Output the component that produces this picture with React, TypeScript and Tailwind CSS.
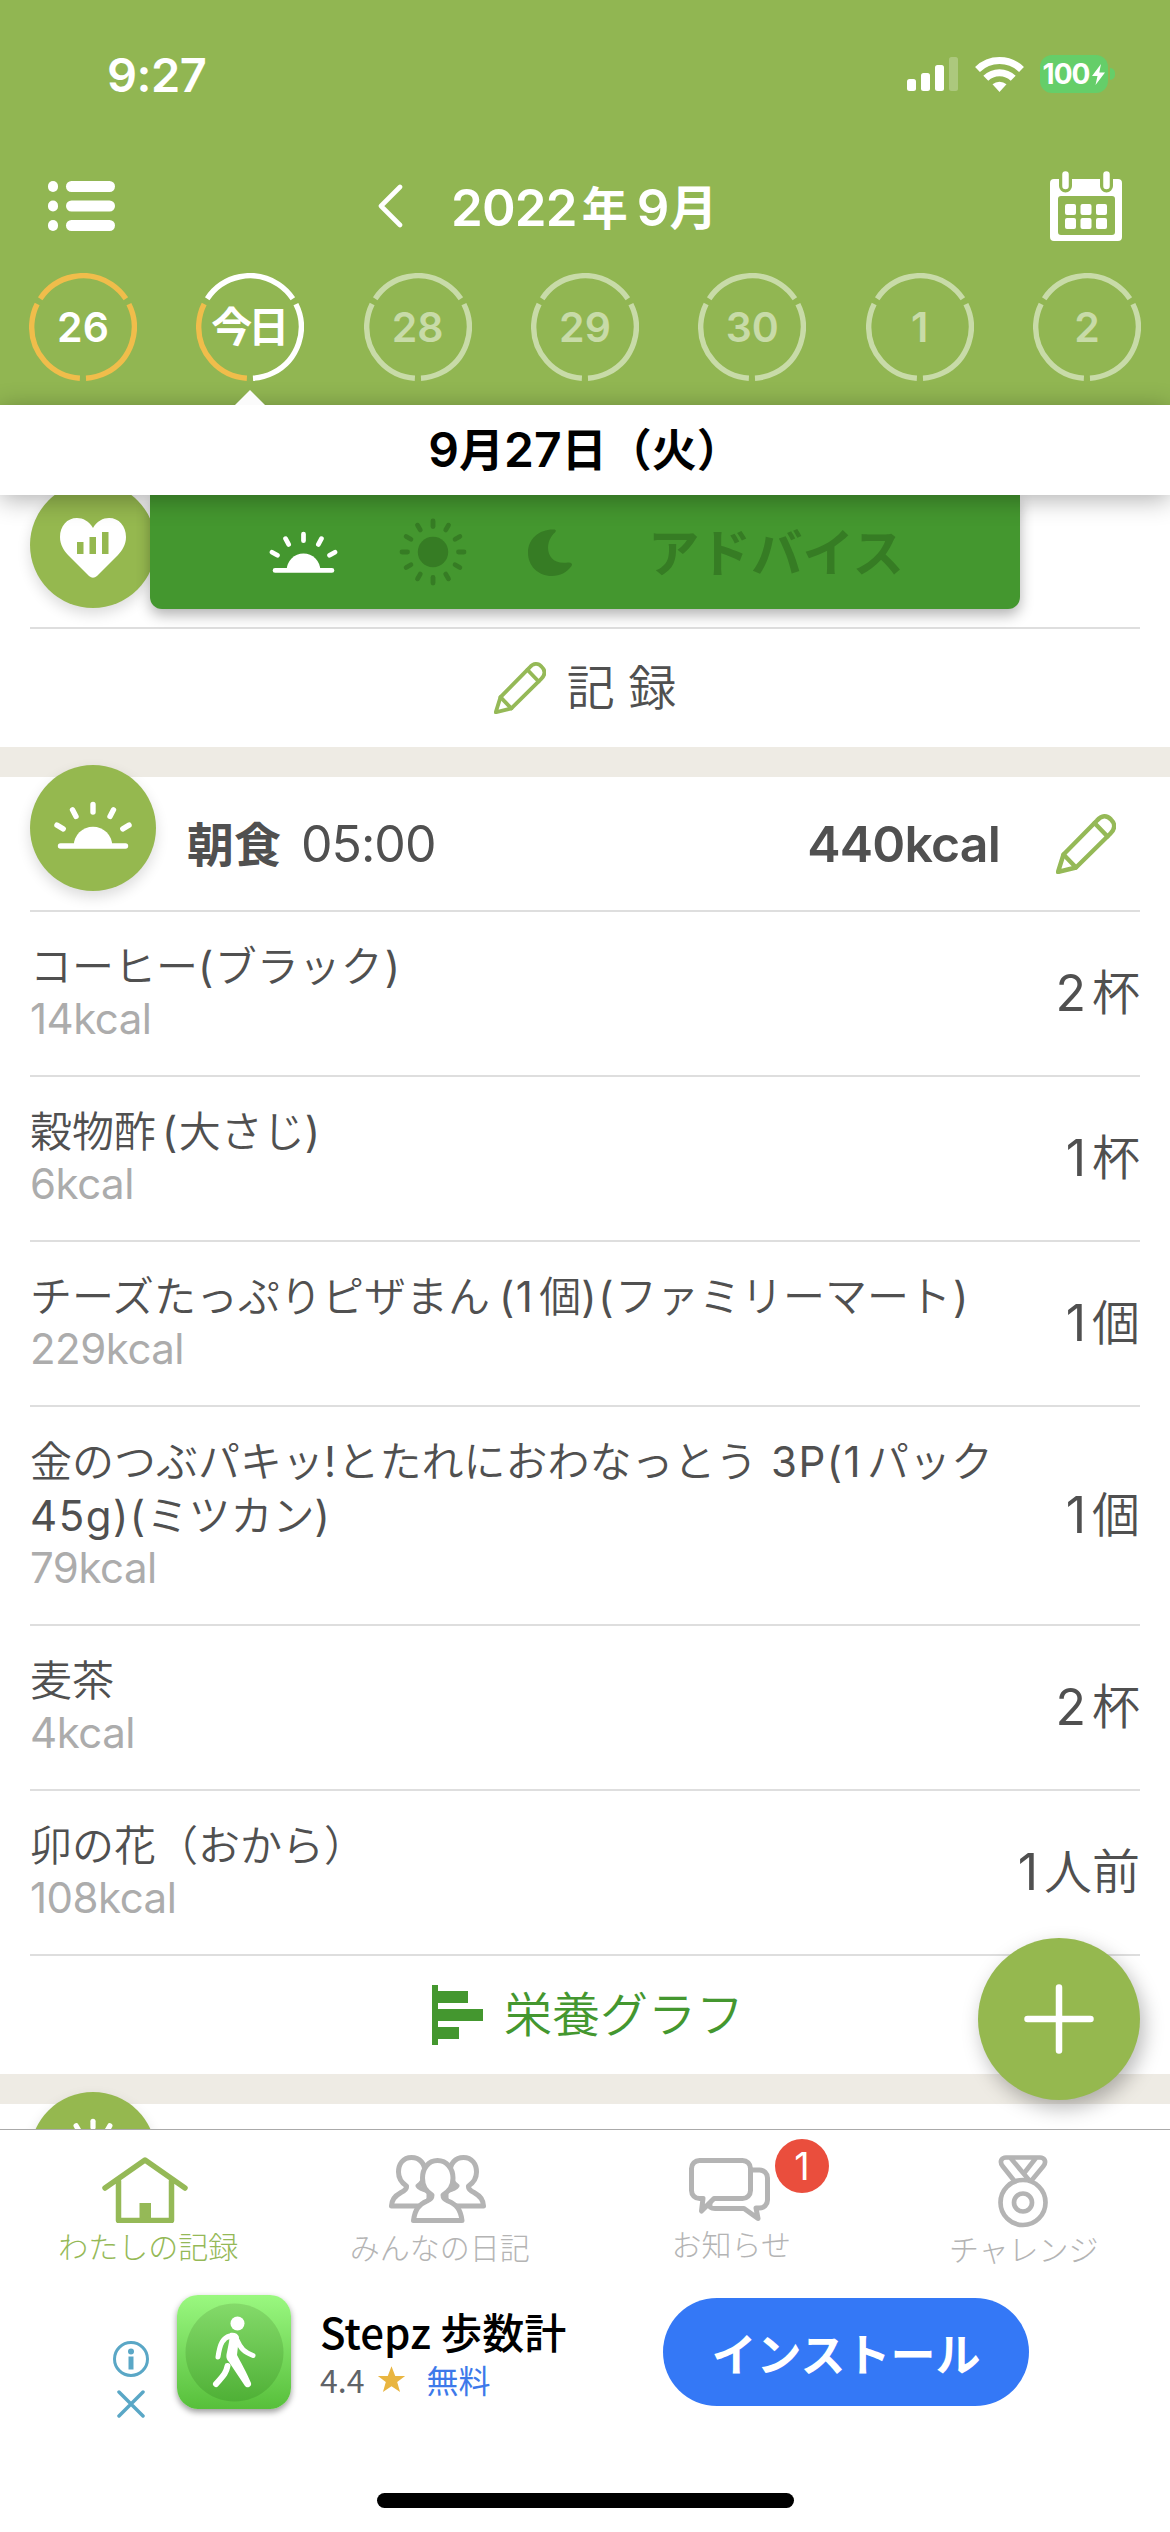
import React from 'react';

interface DayItem {
  label: string;
  state: 'done' | 'today' | 'future';
}

interface FoodItem {
  name: React.ReactNode;
  kcal: string;
  amount: string;
  unit: string;
}

const days: DayItem[] = [
  { label: '26', state: 'done' },
  { label: '今日', state: 'today' },
  { label: '28', state: 'future' },
  { label: '29', state: 'future' },
  { label: '30', state: 'future' },
  { label: '1', state: 'future' },
  { label: '2', state: 'future' }
];

// Latin letters, digits and brackets inside a Japanese name
const Latin: React.FC<{ className?: string; children: React.ReactNode }> = ({ className = '', children }) => (
  <span className={`font-normal tracking-[1.5px] ${className}`}>{children}</span>
);

const foods: FoodItem[] = [
  {
    name: (
      <>
        コーヒー<Latin>(</Latin>ブラック<Latin className="ml-[2px]">)</Latin>
      </>
    ),
    kcal: '14kcal',
    amount: '2',
    unit: '杯'
  },
  {
    name: (
      <>
        穀物酢<Latin className="ml-[6px]">(</Latin>大さじ<Latin>)</Latin>
      </>
    ),
    kcal: '6kcal',
    amount: '1',
    unit: '杯'
  },
  {
    name: (
      <>
        チーズたっぷりピザまん<Latin className="ml-[9px]">(1</Latin>
        <span className="ml-[5px]">個</span>
        <Latin>)(</Latin>ファミリーマート<Latin className="ml-[2px]">)</Latin>
      </>
    ),
    kcal: '229kcal',
    amount: '1',
    unit: '個'
  },
  {
    name: (
      <>
        金のつぶパキッ<Latin>!</Latin>とたれにおわなっとう<Latin className="mr-[5px]"> 3P(1</Latin>パック
        <br />
        <Latin>45g)(</Latin>ミツカン<Latin>)</Latin>
      </>
    ),
    kcal: '79kcal',
    amount: '1',
    unit: '個'
  },
  { name: '麦茶', kcal: '4kcal', amount: '2', unit: '杯' },
  { name: '卯の花（おから）', kcal: '108kcal', amount: '1', unit: '人前' }
];

const ringColors = {
  done: ['#f0bd4b', '#f0bd4b', '#f0bd4b'],
  today: ['#ffffff', '#f0bd4b', '#ffffff'],
  future: ['#c8dba8', '#c8dba8', '#c8dba8']
};

// Three arcs, starting at the lower right and going clockwise
const DayRing: React.FC<{ state: DayItem['state'] }> = ({ state }) => {
  const [right, left, top] = ringColors[state];
  const arcs = [
    { color: right, rotate: -26.5 },
    { color: left, rotate: 93.5 },
    { color: top, rotate: 213.5 }
  ];
  return (
    <svg viewBox="-54 -54 108 108" className="absolute inset-0 size-full" fill="none">
      {arcs.map((arc) => (
        <circle
          key={arc.rotate}
          r="51.3"
          stroke={arc.color}
          strokeWidth="5.4"
          strokeDasharray="101.2 400"
          transform={`rotate(${arc.rotate})`}
        />
      ))}
    </svg>
  );
};

const SunriseIcon: React.FC<{ className?: string }> = ({ className }) => (
  <svg viewBox="-39 -45 78 48" className={className} stroke="currentColor" strokeWidth="5.4" strokeLinecap="round">
    <path d="M-32.5 0H32.5" />
    <path d="M-19.3 0a19.3 19.3 0 0 1 38.6 0z" fill="currentColor" stroke="none" />
    <path d="M0 -41.5V-34M20.5 -36.2L17 -29.6M-20.5 -36.2L-17 -29.6M36 -20.8L29.8 -17.2M-36 -20.8L-29.8 -17.2" />
  </svg>
);

const SunIcon: React.FC<{ className?: string }> = ({ className }) => (
  <svg viewBox="-34 -34 68 68" className={className} stroke="currentColor" strokeWidth="4.8" strokeLinecap="round">
    <circle r="15.2" fill="currentColor" stroke="none" />
    {[0, 30, 60, 90, 120, 150, 180, 210, 240, 270, 300, 330].map((angle) => (
      <path key={angle} d="M0 -31V-25.5" transform={`rotate(${angle})`} />
    ))}
  </svg>
);

const PencilIcon: React.FC<{ className?: string }> = ({ className }) => (
  <svg
    viewBox="0 0 60 60"
    className={className}
    fill="none"
    stroke="#95b957"
    strokeWidth="4.4"
    strokeLinejoin="round"
    strokeLinecap="round"
  >
    <path d="M2 58L7.5 40.5L41 6.5C45.5 1 51 1 55 5.5C59.5 10 59 15 54.5 19.5L20 53.5Z" />
    <path d="M38.5 9L51.5 22.5M7.5 40.5L20 53.5" />
  </svg>
);

const CircleBadge: React.FC<{ className?: string; children: React.ReactNode }> = ({ className, children }) => (
  <div
    className={`flex size-[126px] shrink-0 items-center justify-center rounded-full bg-[#95b84f] text-white shadow-[0_6px_14px_rgba(0,0,0,0.14)] ${className}`}
  >
    {children}
  </div>
);

const StatusBar = () => (
  <div className="flex h-[148px] shrink-0 items-center pl-[107px] pr-[55px]">
    <span className="text-[47px] font-semibold leading-none tracking-[-0.5px]">9:27</span>
    <svg viewBox="0 0 52 36" className="ml-auto h-[36px] w-[52px]" fill="#fff">
      <rect x="0" y="23" width="9" height="12" rx="2.5" />
      <rect x="14" y="17" width="9" height="18" rx="2.5" />
      <rect x="28" y="9" width="9" height="26" rx="2.5" />
      <rect x="42" y="1" width="9" height="34" rx="2.5" opacity="0.25" />
    </svg>
    <svg viewBox="0 0 49 36" className="ml-[16px] h-[36px] w-[49px]" fill="none" stroke="#fff" strokeWidth="7">
      <path d="M2.5 13.5A31.5 31.5 0 0 1 46.5 13.5" />
      <path d="M10.8 22.3A19.5 19.5 0 0 1 38.2 22.3" />
      <path d="M17.5 28.3A10.5 10.5 0 0 1 31.5 28.3L24.5 36Z" fill="#fff" stroke="none" />
    </svg>
    <div className="ml-[16px] flex h-[38px] w-[68px] items-center justify-center rounded-[12px] bg-[#65ce69]">
      <span className="text-[28px] font-bold leading-none tracking-[-1px]">100</span>
      <svg viewBox="0 0 13 21" className="ml-[3px] h-[21px] w-[13px]" fill="#fff">
        <path d="M9 0L0 12H5.5L3.5 21L13 8.5H7.3Z" />
      </svg>
    </div>
    <div className="ml-[2px] h-[12px] w-[5px] rounded-r-full bg-[#65ce69]" />
  </div>
);

const Header = () => (
  <header className="flex h-[405px] shrink-0 flex-col bg-[#91b652] text-white">
    <StatusBar />

    {/* Month navigation */}
    <div className="flex h-[116px] shrink-0 items-center pl-[48px] pr-[48px]">
      <svg viewBox="0 0 67 50" className="h-[50px] w-[67px]" fill="#fff">
        {[0, 19.5, 39].map((y) => (
          <g key={y}>
            <rect x="0" y={y} width="10" height="11" rx="5" />
            <rect x="18" y={y} width="49" height="11" rx="5.5" />
          </g>
        ))}
      </svg>
      <svg
        viewBox="0 0 26 44"
        className="ml-[262px] h-[44px] w-[26px]"
        fill="none"
        stroke="#fff"
        strokeWidth="4.6"
        strokeLinecap="round"
        strokeLinejoin="round"
      >
        <path d="M23 3L4 22L23 41" />
      </svg>
      <h1 className="ml-[48px] mt-[3px] flex items-center text-[51px] font-semibold leading-none">
        <span className="tracking-[-0.8px]">2022</span>
        <span className="ml-[5px] text-[46px]">年</span>
        <span className="ml-[9px]">9</span>
        <span className="text-[48px]">月</span>
      </h1>
      <svg viewBox="0 0 72 70" className="ml-auto h-[70px] w-[72px]">
        <path
          d="M4 8H68a4 4 0 0 1 4 4V66a4 4 0 0 1-4 4H4a4 4 0 0 1-4-4V12a4 4 0 0 1 4-4zM11 25a3 3 0 0 0-3 3V61a3 3 0 0 0 3 3H62a3 3 0 0 0 3-3V28a3 3 0 0 0-3-3z"
          fill="#fff"
          fillRule="evenodd"
        />
        <path d="M15.5 6V15M56.5 6V15" stroke="#91b652" strokeWidth="13" strokeLinecap="round" />
        <path d="M15.5 3.5V15M56.5 3.5V15" stroke="#fff" strokeWidth="6.5" strokeLinecap="round" />
        {[15, 30.5, 46].map((x) => (
          <g key={x} fill="#fff">
            <rect x={x} y="33" width="11" height="11" rx="2" />
            <rect x={x} y="47" width="11" height="11" rx="2" />
          </g>
        ))}
      </svg>
    </div>

    {/* Day selector */}
    <div className="mt-[9px] flex justify-between px-[29px]">
      {days.map((day) => (
        <div key={day.label} className="relative flex size-[108px] items-center justify-center">
          <DayRing state={day.state} />
          <span
            className={`text-[41px] font-semibold leading-none ${
              day.state === 'future' ? 'text-[#c8dba8]' : 'text-white'
            } ${day.state === 'today' ? 'mr-[4px] tracking-[-4px]' : ''}`}
          >
            {day.label}
          </span>
          {day.state === 'today' && (
            <svg viewBox="0 0 30 15" className="absolute left-[39px] top-[117px] z-20 h-[15px] w-[30px]">
              <path d="M0 15L15 0L30 15Z" fill="#fbfbfb" />
            </svg>
          )}
        </div>
      ))}
    </div>
  </header>
);

const AdviceRow = () => (
  <div className="flex h-[132px] px-[30px]">
    <CircleBadge className="-mt-[13px]">
      <svg viewBox="0 0 66 60" className="mt-[6px] h-[60px] w-[66px]">
        <path
          d="M33 10C29 3 23 0 17 0C7 0 0 8 0 19C0 27 4 32.5 8 37L29 58Q33 61.5 37 58L58 37C62 32.5 66 27 66 19C66 8 59 0 49 0C43 0 37 3 33 10Z"
          fill="#fff"
        />
        <path d="M17 24h6.5v12H17zM29.5 19H36v17h-6.5zM42 14h6.5v22H42z" fill="#95b84f" />
      </svg>
    </CircleBadge>
    <div className="relative -ml-[6px] flex h-[114px] w-[870px] items-center rounded-b-[12px] bg-[#44972f] pl-[119px] text-[#367c24] shadow-[0_6px_14px_rgba(0,0,0,0.3)]">
      <SunriseIcon className="h-[42px] w-[69px] text-white" />
      <SunIcon className="ml-[61px] h-[68px] w-[68px]" />
      <svg viewBox="0 0 44 47" className="ml-[61px] h-[47px] w-[44px]" fill="currentColor">
        <path d="M25 0.5C28 0 28.5 2 27 3.5C15 14 18 37 40 33.5C43 33 45 35 43.5 37C39 43.5 32 47 24 47C10 47 0 37 0 23.5C0 10 11 0.5 25 0.5Z" />
      </svg>
      <span className="ml-[76px] mt-[4px] text-[51.5px] font-bold leading-none">アドバイス</span>
    </div>
  </div>
);

const FoodRow: React.FC<{ food: FoodItem }> = ({ food }) => (
  <li className="flex items-center justify-between border-b-2 border-[#dedede] pb-[33px] pt-[28px]">
    <div className="whitespace-nowrap text-[42px]">
      <p className="font-[350] leading-[54px]">{food.name}</p>
      <p className="mt-[2px] leading-[46px] tracking-[-0.5px] text-[#acacac]">{food.kcal}</p>
    </div>
    <p className="mt-[4px] flex items-center whitespace-nowrap text-[48px] leading-none">
      <span className="text-[50px]">{food.amount}</span>
      <span className="ml-[6px] font-[350]">{food.unit}</span>
    </p>
  </li>
);

const TabBar = () => (
  <nav className="grid h-[142px] grid-cols-4 border-t border-[#aaaaaa] text-[30px] font-light leading-none text-[#b4b4b4]">
    <div className="flex flex-col items-center pt-[27px] text-[#95b957]">
      <svg viewBox="0 0 86 66" className="mr-[3px] h-[66px] w-[86px]" fill="none" stroke="currentColor" strokeWidth="5.5" strokeLinecap="round" strokeLinejoin="round">
        <path d="M3 31L43 3L83 31M16.5 24V63.5H69.5V24" />
        <path d="M37.5 46H49V62H37.5Z" fill="currentColor" stroke="none" />
      </svg>
      <span className="mt-[9px] ml-[4px]">わたしの記録</span>
    </div>
    <div className="flex flex-col items-center pt-[25px]">
      <svg viewBox="0 0 97 69" className="mr-[3px] h-[69px] w-[97px]" fill="#fff" stroke="currentColor" strokeWidth="5" strokeLinejoin="round">
        <path d="M22.5 2.5C14 2.5 9.5 9 9.5 17C9.5 24 13 28 17.5 31C18 34 16 35.5 12 37.5C5 41.5 3 45 2.5 51H40V36C36 35 30 33 29 31C33 28 36 24 36 17C36 9 31 2.5 22.5 2.5Z" />
        <path d="M74.5 2.5C83 2.5 87.5 9 87.5 17C87.5 24 84 28 79.5 31C79 34 81 35.5 85 37.5C92 41.5 94 45 94.5 51H57V36C61 35 67 33 68 31C64 28 61 24 61 17C61 9 66 2.5 74.5 2.5Z" />
        <path d="M48.5 5.5C39 5.5 33.5 14 33.5 23C33.5 32 37 36 43 40C43 43 42 44 38 46C30 49.5 26 54 24.5 65.5H73C71.5 54 67.5 49.5 59 46C55 44 54 43 54 40C60 36 64 32 64 23C64 14 58 5.5 48.5 5.5Z" />
      </svg>
      <span className="mt-[9px] ml-[2px]">みんなの日記</span>
    </div>
    <div className="relative flex flex-col items-center pt-[28px]">
      <svg viewBox="0 0 81 64" className="mr-[4px] h-[64px] w-[81px]" fill="none" stroke="currentColor" strokeWidth="5" strokeLinecap="round" strokeLinejoin="round">
        <path d="M10.5 2.5H53.5a8 8 0 0 1 8 8V32.5a8 8 0 0 1-8 8H25L12.5 53L14 40.5H10.5a8 8 0 0 1-8-8V10.5a8 8 0 0 1 8-8Z" />
        <path d="M63 12H70.5a8 8 0 0 1 8 8V42a8 8 0 0 1-8 8H67L69 60.5L55 50.5H26C22 50.5 20 49 21 46" />
      </svg>
      <span className="mt-[8px]">お知らせ</span>
      <span className="absolute left-[190px] top-[9px] flex size-[54px] items-center justify-center rounded-full bg-[#ea4e3d] text-[38px] font-normal text-white">
        1
      </span>
    </div>
    <div className="flex flex-col items-center pt-[25px]">
      <svg viewBox="0 0 50 73" className="mr-[2px] h-[73px] w-[50px]" fill="none" stroke="currentColor" strokeWidth="4.7" strokeLinecap="round" strokeLinejoin="round">
        <circle cx="25" cy="47.5" r="22.5" />
        <circle cx="25" cy="47.5" r="9" />
        <path d="M16 25.5L4.5 11C1 6 4 2.5 8 2.5H42C46 2.5 49 6 45.5 11L33.5 25.5M13 3.5L31 25M37.5 3.5L27 17" />
      </svg>
      <span className="mt-[7px]">チャレンジ</span>
    </div>
  </nav>
);

const AdBanner = () => (
  <div className="flex h-[162px] items-start pl-[113px] font-['Noto_Sans_CJK_JP',sans-serif]">
    <div className="mt-[70px] flex w-[36px] flex-col items-center">
      <svg viewBox="0 0 36 36" className="size-[36px]" fill="none" stroke="#5aa7c6">
        <circle cx="18" cy="18" r="16.5" strokeWidth="3" />
        <circle cx="18" cy="10.5" r="3" fill="#5aa7c6" stroke="none" />
        <path d="M18 15.5V28.5" strokeWidth="5" />
      </svg>
      <svg viewBox="0 0 28 28" className="mt-[13px] size-[28px]" stroke="#5aa7c6" strokeWidth="3.5" strokeLinecap="round">
        <path d="M2 2L26 26M26 2L2 26" />
      </svg>
    </div>
    <div className="ml-[28px] mt-[24px] size-[114px] overflow-hidden rounded-[21px] bg-linear-to-b from-[#9af880] to-[#57bf3a] shadow-[0_3px_6px_rgba(0,0,0,0.4)]">
      <svg viewBox="0 0 114 114" className="size-full" fill="none" stroke="#fff" strokeLinecap="round" strokeLinejoin="round">
        <defs>
          <linearGradient id="disc" x1="0" y1="0" x2="0" y2="1">
            <stop offset="0" stopColor="#84da6a" />
            <stop offset="1" stopColor="#4fb036" />
          </linearGradient>
        </defs>
        <circle cx="57.5" cy="57.5" r="49" fill="url(#disc)" stroke="none" />
        <circle cx="60.5" cy="28.5" r="7" fill="#fff" stroke="none" />
        <path d="M53 38C57 37 61 38.5 62 42L60 60C63 66 70 78 74 88C75 92 70 93.5 68 91L52 67C49 64 49 61 50 57L52 47Z" fill="#fff" stroke="none" />
        <path d="M53 41C46 43 43 48 41 62" strokeWidth="5" />
        <path d="M60 45C64 54 67 57 76 60.5" strokeWidth="5" />
        <path d="M50.5 71C49 79 45 82 39 89" strokeWidth="6" />
      </svg>
    </div>
    <div className="ml-[29px] mt-[33px] w-[260px]">
      <p className="whitespace-nowrap text-[42px] font-medium leading-[54px] text-black">Stepz 歩数計</p>
      <p className="mt-[2px] flex items-center text-[32px] leading-[38px] text-[#5f6368]">
        4.4
        <svg viewBox="0 0 24 24" className="ml-[13px] size-[29px]" fill="#e9b540">
          <path d="M12 1L15.1 9H23.3L16.7 14L19.1 22.3L12 17.5L4.9 22.3L7.3 14L0.7 9H8.9Z" />
        </svg>
        <span className="ml-[20px] text-[#3d79ea]">無料</span>
      </p>
    </div>
    <button className="ml-[83px] mt-[27px] h-[108px] w-[366px] rounded-full bg-[#3478f6] text-[45px] font-bold leading-none text-white">
      インストール
    </button>
  </div>
);

const App: React.FC = () => {
  return (
    <div className="relative flex h-[2532px] w-[1170px] flex-col overflow-hidden bg-white font-['Inter','Noto_Sans_CJK_JP',sans-serif] text-[#505050]">
      <Header />

      {/* Selected date */}
      <div className="relative z-10 flex h-[90px] shrink-0 items-center justify-center bg-white text-[45px] font-semibold leading-none text-black shadow-[0_4px_24px_rgba(0,0,0,0.32)]">
        <span className="text-[48px]">9</span>月<span className="text-[48px]">27</span>日（火）
      </div>

      <main className="h-[1634px] shrink-0 overflow-hidden">
        <AdviceRow />
        <div className="mx-[30px] flex h-[120px] items-center justify-center border-t-2 border-[#dedede] text-[48px] font-[350] leading-none">
          <PencilIcon className="size-[52px]" />
          <span className="ml-[21px]">記 録</span>
        </div>

        {/* Breakfast */}
        <section className="border-t-[30px] border-[#eeebe4] px-[30px]">
          <div className="flex h-[135px] items-center border-b-2 border-[#dedede] text-[50px] leading-none">
            <CircleBadge className="-mt-[12px] self-start">
              <SunriseIcon className="mb-[6px] h-[48px] w-[78px]" />
            </CircleBadge>
            <h2 className="ml-[31px] mt-[1px] text-[47px] font-bold">朝食</h2>
            <span className="ml-[20px] tracking-[-1px]">05:00</span>
            <span className="ml-auto font-semibold tracking-[-0.8px]">440kcal</span>
            <PencilIcon className="ml-[56px] mr-[24px] size-[60px]" />
          </div>
          <ul>
            {foods.map((food) => (
              <FoodRow key={food.kcal} food={food} />
            ))}
          </ul>
          <div className="flex h-[118px] items-center pl-[402px] text-[48px] font-[350] leading-none text-[#44972f]">
            <svg viewBox="0 0 51 60" className="h-[60px] w-[51px]" fill="currentColor">
              <path d="M0 0H6V6H36V18H6V24H51V36H6V42H27V54H6V60H0Z" />
            </svg>
            <span className="ml-[21px]">栄養グラフ</span>
          </div>
        </section>

        {/* Lunch */}
        <section className="border-t-[30px] border-[#eeebe4] px-[30px]">
          <CircleBadge className="-mt-[12px]">
            <SunIcon className="size-[74px]" />
          </CircleBadge>
        </section>
      </main>

      <TabBar />
      <AdBanner />

      {/* Home indicator */}
      <div className="mx-auto mt-[60px] h-[15px] w-[417px] shrink-0 rounded-full bg-black" />

      {/* Add button */}
      <button className="absolute left-[978px] top-[1938px] flex size-[162px] items-center justify-center rounded-full bg-[#95b84f] shadow-[4px_8px_20px_rgba(0,0,0,0.28)]">
        <svg viewBox="0 0 70 70" className="size-[70px]" stroke="#fff" strokeWidth="6.5" strokeLinecap="round">
          <path d="M35 3.5V66.5M3.5 35H66.5" />
        </svg>
      </button>
    </div>
  );
};

export default App;
